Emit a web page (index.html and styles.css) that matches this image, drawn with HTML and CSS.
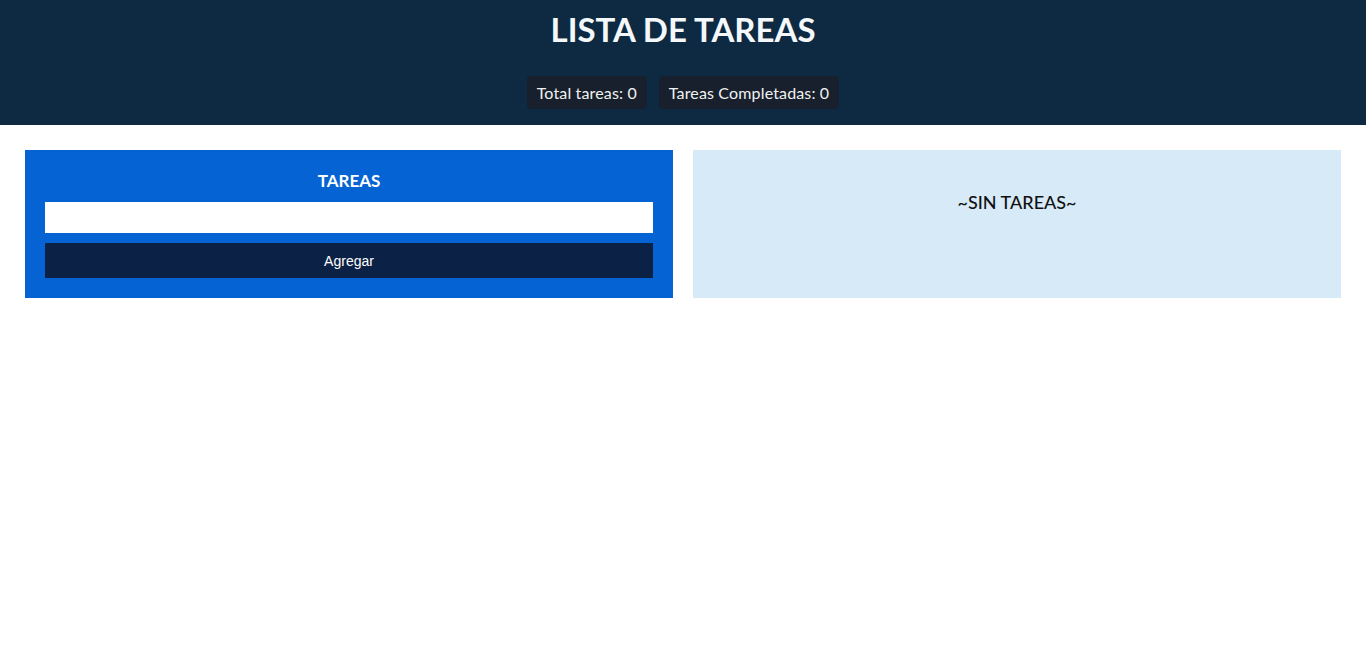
FILE: index.html
```html
<!DOCTYPE html>
<html lang="es">
<head>
<meta charset="utf-8">
<title>Lista de tareas</title>
<link rel="stylesheet" href="styles.css">
</head>
<body>
<header class="header">
  <h1 class="title">LISTA DE TAREAS</h1>
  <div class="stats">
    <span class="stat">Total tareas: 0</span>
    <span class="stat">Tareas Completadas: 0</span>
  </div>
</header>
<main class="main">
  <section class="card card-form">
    <h2 class="card-title">TAREAS</h2>
    <input class="task-input" type="text">
    <button class="btn-add" type="button">Agregar</button>
  </section>
  <section class="card card-list">
    <h2 class="empty">~SIN TAREAS~</h2>
  </section>
</main>
</body>
</html>
```
FILE: styles.css
```css
* { box-sizing: border-box; }
body {
  margin: 0;
  font-family: "Lato", "Noto Sans", sans-serif;
  background: #ffffff;
}
.header {
  background: #0d2a42;
  height: 125px;
  display: flex;
  flex-direction: column;
  align-items: center;
  padding-top: 9px;
}
.title {
  margin: 0;
  color: #f4f8fb;
  font-size: 33px;
  font-weight: 700;
  line-height: 40px;
}
.stats {
  display: flex;
  gap: 12px;
  margin-top: 27px;
}
.stat {
  background: #17202c;
  color: #f1f1f1;
  font-size: 16px;
  height: 33px;
  line-height: 33px;
  padding: 0 10px;
  letter-spacing: 0.15px;
  border-radius: 4px;
}
.main {
  display: grid;
  grid-template-columns: 1fr 1fr;
  gap: 20px;
  padding: 25px;
}
.card {
  min-width: 0;
  height: 148px;
}
.card-form {
  background: #0563d4;
  padding: 20px;
  display: flex;
  flex-direction: column;
}
.card-title {
  margin: 0 0 11px;
  color: #ffffff;
  text-align: center;
  font-size: 17px;
  font-weight: 700;
  line-height: 21px;
}
.task-input {
  width: 100%;
  min-width: 0;
  height: 31px;
  border: none;
  background: #ffffff;
  margin: 0 0 10px;
  padding: 0 6px;
  outline: none;
}
.btn-add {
  height: 35px;
  border: none;
  background: #0b2146;
  color: #ffffff;
  font-family: "Liberation Sans", Arial, sans-serif;
  font-size: 14px;
}
.card-list {
  background: #d6eaf8;
  padding-top: 40px;
}
.empty {
  margin: 0;
  text-align: center;
  font-size: 18px;
  font-weight: 500;
  color: #111111;
  line-height: 24px;
}
```
